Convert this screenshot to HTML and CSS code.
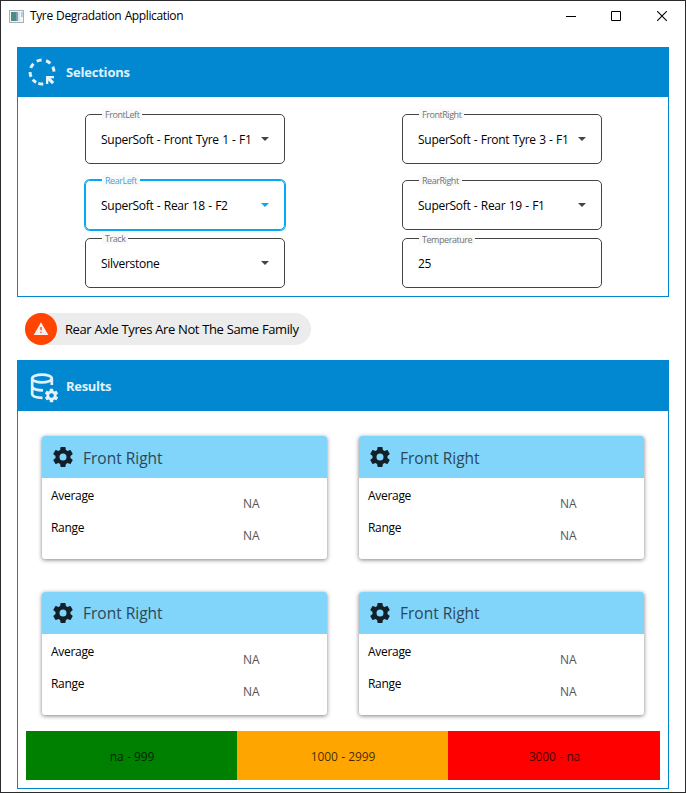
FILE: index.html
```
<!DOCTYPE html>
<html lang="en">
<head>
<meta charset="utf-8">
<title>Tyre Degradation Application</title>
<link rel="stylesheet" href="styles.css">
</head>
<body>
<svg width="0" height="0" class="defs">
  <symbol id="cog" viewBox="0 0 24 24"><path d="M12,15.5A3.5,3.5 0 0,1 8.5,12A3.5,3.5 0 0,1 12,8.5A3.5,3.5 0 0,1 15.5,12A3.5,3.5 0 0,1 12,15.5M19.43,12.97C19.47,12.65 19.5,12.33 19.5,12C19.5,11.67 19.47,11.34 19.43,11L21.54,9.37C21.73,9.22 21.78,8.95 21.66,8.73L19.66,5.27C19.54,5.05 19.27,4.96 19.05,5.05L16.56,6.05C16.04,5.66 15.5,5.32 14.87,5.07L14.5,2.42C14.46,2.18 14.25,2 14,2H10C9.75,2 9.54,2.18 9.5,2.42L9.13,5.07C8.5,5.32 7.96,5.66 7.44,6.05L4.95,5.05C4.73,4.96 4.46,5.05 4.34,5.27L2.34,8.73C2.21,8.95 2.27,9.22 2.46,9.37L4.57,11C4.53,11.34 4.5,11.67 4.5,12C4.5,12.33 4.53,12.65 4.57,12.97L2.46,14.63C2.27,14.78 2.21,15.05 2.34,15.27L4.34,18.73C4.46,18.95 4.73,19.03 4.95,18.95L7.44,17.94C7.96,18.34 8.5,18.68 9.13,18.93L9.5,21.58C9.54,21.82 9.75,22 10,22H14C14.25,22 14.46,21.82 14.5,21.58L14.87,18.93C15.5,18.67 16.04,18.34 16.56,17.94L19.05,18.95C19.27,19.03 19.54,18.95 19.66,18.73L21.66,15.27C21.78,15.05 21.73,14.78 21.54,14.63L19.43,12.97Z"/></symbol>
</svg>
<div class="window">
  <header class="titlebar">
    <svg class="app-icon" width="15" height="13" viewBox="0 0 15 13"><rect x=".5" y=".5" width="14" height="12" fill="#f4f4f4" stroke="#a9b0b5"/><rect x="2" y="2" width="5" height="9" fill="#4b8c87"/><rect x="7" y="2" width="2" height="9" fill="#7fa0b0"/><rect x="9" y="2" width="2" height="9" fill="#dfe6ef"/><rect x="12" y="2" width="2" height="5" fill="#b5cbe0"/></svg>
    <span class="app-title">Tyre Degradation Application</span>
    <div class="controls">
      <svg width="10" height="11"><path d="M0 5.5H10" stroke="#000"/></svg>
      <svg width="10" height="11"><path d="M.5 .5H9.5V9.5H.5Z" fill="none" stroke="#000"/></svg>
      <svg class="close" width="11" height="11"><path d="M.2 .2L9.8 9.8M9.8 .2L.2 9.8" stroke="#000" stroke-width="1.1"/></svg>
    </div>
  </header>

  <section class="group">
    <h2 class="group-head">
      <svg class="group-icon" width="32" height="32" viewBox="0 0 32 32">
        <g fill="none" stroke="#e1f1fa" stroke-width="3" transform="translate(16 16)">
          <path transform="rotate(-14)" d="M-2.500 -11.700Q0 -12.200 2.500 -11.700"/>
          <path transform="rotate(32)" d="M-2.500 -11.700Q0 -12.200 2.500 -11.700"/>
          <path transform="rotate(76)" d="M-2.500 -11.700Q0 -12.200 2.500 -11.700"/>
          <path transform="rotate(-58)" d="M-2.500 -11.700Q0 -12.200 2.500 -11.700"/>
          <path transform="rotate(-102)" d="M-2.500 -11.700Q0 -12.200 2.500 -11.700"/>
          <path transform="rotate(-140)" d="M-2.200 -11.700Q0 -12.200 2.200 -11.700"/>
          <path transform="rotate(-174)" d="M-2.500 -11.700Q0 -12.200 2.500 -11.700"/>
        </g>
        <path d="M20 20H28V22.300H24.600L28.300 26L26 28.300L22.300 24.600V28H20Z" fill="#e6f3fa"/>
      </svg>
      <span class="head-text">Selections</span>
    </h2>
    <div class="fields">
      <div class="field"><label>FrontLeft</label><span class="value">SuperSoft - Front Tyre 1 - F1</span><i class="arrow"></i></div>
      <div class="field"><label>FrontRight</label><span class="value">SuperSoft - Front Tyre 3 - F1</span><i class="arrow"></i></div>
      <div class="field focus"><label>RearLeft</label><span class="value">SuperSoft - Rear 18 - F2</span><i class="arrow"></i></div>
      <div class="field"><label>RearRight</label><span class="value">SuperSoft - Rear 19 - F1</span><i class="arrow"></i></div>
      <div class="field"><label>Track</label><span class="value">Silverstone</span><i class="arrow"></i></div>
      <div class="field"><label class="low">Temperature</label><span class="value">25</span></div>
    </div>
  </section>

  <div class="chip">
    <span class="chip-icon"><svg width="16" height="16" viewBox="0 0 24 24"><path fill="#f4eeee" d="M13 14H11V9H13M13 18H11V16H13M1 21H23L12 2L1 21Z"/></svg></span>
    <span class="chip-text">Rear Axle Tyres Are Not The Same Family</span>
  </div>

  <section class="group results">
    <h2 class="group-head">
      <svg class="group-icon" width="34" height="34" viewBox="0 0 34 34"><g fill="none" stroke="#e1f1fa" stroke-width="2.7"><ellipse cx="16" cy="9.500" rx="9.800" ry="3.800"/><path d="M6.200 9.500V25C6.200 27.300 10 28.800 16.500 28.800M25.800 9.500V16M6.200 18C7.500 20.300 11 21.300 17 21.300"/></g><use href="#cog" x="17.500" y="18.500" width="16" height="16" fill="#e6f3fa"/></svg>
      <span class="head-text">Results</span>
    </h2>
    <div class="cards">
      <article class="card"><h3><svg width="24" height="24"><use href="#cog"/></svg><span>Front Right</span></h3><dl><dt>Average</dt><dd>NA</dd><dt>Range</dt><dd>NA</dd></dl></article>
      <article class="card"><h3><svg width="24" height="24"><use href="#cog"/></svg><span>Front Right</span></h3><dl><dt>Average</dt><dd>NA</dd><dt>Range</dt><dd>NA</dd></dl></article>
      <article class="card"><h3><svg width="24" height="24"><use href="#cog"/></svg><span>Front Right</span></h3><dl><dt>Average</dt><dd>NA</dd><dt>Range</dt><dd>NA</dd></dl></article>
      <article class="card"><h3><svg width="24" height="24"><use href="#cog"/></svg><span>Front Right</span></h3><dl><dt>Average</dt><dd>NA</dd><dt>Range</dt><dd>NA</dd></dl></article>
    </div>
    <div class="legend"><span class="good">na - 999</span><span class="warn">1000 - 2999</span><span class="bad">3000 - na</span></div>
  </section>
</div>
</body>
</html>
```
FILE: styles.css
```
* { box-sizing: border-box; }
body { margin: 0; font: 12px/16px "Open Sans", "Noto Sans", sans-serif; color: #111; background: #fff; }
.defs { position: absolute; }
h2, h3, dl, dd { margin: 0; font-weight: normal; }
svg { display: block; flex: none; }
span, dt, dd { white-space: nowrap; }

.window { width: 686px; height: 793px; border: 1px solid #2b2b2e; padding: 0 16px; overflow: hidden; }

.titlebar { display: flex; align-items: center; height: 30px; margin: 0 -8px 16px; color: #000; }
.app-title { margin-left: 6px; letter-spacing: -0.38px; word-spacing: 0.6px; }
.controls { display: flex; gap: 35px; margin-left: auto; margin-right: 9px; }
.close { margin-left: 1px; }

.group { border: 1px solid #0288d1; width: 652px; height: 250px; }
.group-head { display: flex; align-items: center; height: 50px; margin: -1px -1px 0; padding-left: 9px; background: #0288d1; }
.head-text { margin-left: 8px; font-size: 13px; font-weight: 700; color: #e1f1fa; letter-spacing: -0.2px; }

.fields { display: grid; grid-template-columns: 200px 200px; grid-template-rows: 50px 50px 50px; column-gap: 117px; padding: 17px 0 0 67px; row-gap: 16px; }
.field { position: relative; display: flex; align-items: center; justify-content: space-between; height: 50px; padding: 0 15px; border: 1px solid #444; border-radius: 5px; }
.field:nth-child(n+5) { margin-top: -8px; }
.field label { position: absolute; left: 16px; top: -6px; padding: 0 3px; font-size: 9px; line-height: 11px; color: #737373; background: #fafafa; letter-spacing: -0.45px; }
.field label.low { top: -5px; }
.arrow { border: 4px solid transparent; border-top-color: #444; border-bottom: 0; }
.value { padding-top: 2px; color: #000; letter-spacing: -0.28px; word-spacing: 0.5px; }
.focus { border-color: #03a9f4; box-shadow: 0 0 0 1px #03a9f4; }
.focus label { color: #35a9e4; }
.focus .arrow { border-top-color: #03a9f4; }

.chip { display: flex; align-items: center; width: 286px; height: 32px; margin: 16px 0 15px 8px; border-radius: 16px; background: #ececec; }
.chip-icon { display: flex; align-items: center; justify-content: center; width: 32px; height: 32px; border-radius: 50%; background: #ff4500; }
.chip-text { margin-left: 8px; font-size: 13px; letter-spacing: -0.44px; word-spacing: 0.4px; color: #000; }

.results { height: 429px; }
.results .group-head { height: 51px; }
.results .head-text { margin-left: 6px; letter-spacing: -0.3px; }
.cards { display: grid; grid-template-columns: 285px 285px; grid-template-rows: 123px 123px; gap: 33px 32px; padding: 25px 0 16px 24px; }
.card { border-radius: 3px; background: #fff; box-shadow: 0 1px 4px rgba(0, 0, 0, .5); overflow: hidden; }
.card h3 { display: flex; align-items: center; height: 42px; padding-left: 9px; background: #81d4fa; color: #2c4856; font-size: 15.5px; }
.card h3 svg { fill: #12202a; }
.card h3 span { margin-left: 8px; padding-top: 2px; }
.card:nth-child(n+3) h3 span { padding-top: 0; }
.card dl { display: grid; grid-template-columns: 192px auto; grid-auto-rows: 32px; padding: 10px 0 0 9px; }
.card dt { color: #000; letter-spacing: -0.3px; }
.card dd { padding-top: 8px; color: #555; }
.legend { display: grid; grid-template-columns: 211px 211px 212px; height: 49px; margin-left: 8px; }
.legend span { display: flex; align-items: center; justify-content: center; padding: 3px 0 0 1px; color: rgba(0, 0, 0, .75); letter-spacing: -0.15px; word-spacing: 0.5px; }
.good { background: #008000; }
.warn { background: #ffa500; }
.bad { background: #f00; }
```
